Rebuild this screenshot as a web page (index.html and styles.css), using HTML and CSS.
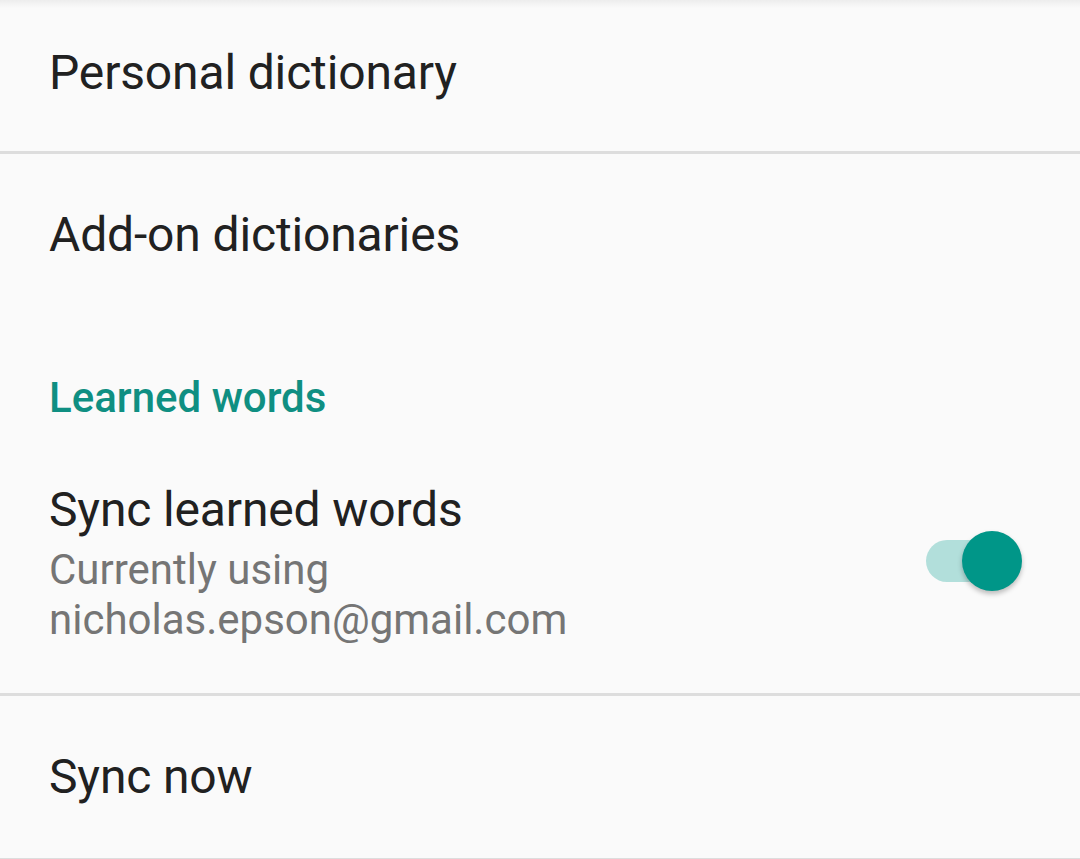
FILE: index.html
```html
<!DOCTYPE html>
<html lang="en">
<head>
  <meta charset="UTF-8">
  <title>Dictionary settings</title>
  <link rel="stylesheet" href="styles.css">
</head>
<body>
  <div class="prefs">
    <div class="pref pref-first">
      <div class="pref-title">Personal dictionary</div>
    </div>
    <div class="divider"></div>
    <div class="pref">
      <div class="pref-title">Add-on dictionaries</div>
    </div>

    <div class="category">Learned words</div>

    <div class="pref pref-switch">
      <div class="pref-text">
        <div class="pref-title">Sync learned words</div>
        <div class="pref-summary">Currently using<br>nicholas.epson@gmail.com</div>
      </div>
      <div class="switch on">
        <div class="switch-track"></div>
        <div class="switch-thumb"></div>
      </div>
    </div>
    <div class="divider"></div>
    <div class="pref">
      <div class="pref-title">Sync now</div>
    </div>
    <div class="divider"></div>
  </div>
</body>
</html>
```

FILE: styles.css
```css
html, body { margin: 0; padding: 0; }
body {
  background: #fafafa;
  font-family: Roboto, 'Noto Sans', sans-serif;
  color: #212121;
  width: 1080px; height: 859px; overflow: hidden;
}
.prefs {
  display: flex; flex-direction: column;
  background: linear-gradient(to bottom, #ededed, #fafafa 8px);
}
.pref {
  display: flex; align-items: center;
  height: 162px; padding: 0 49px; box-sizing: border-box;
}
.pref-first { height: 151px; padding-bottom: 6px; }
.pref-title { font-size: 48px; line-height: 58px; letter-spacing: -0.15px; }
.divider { height: 3px; background: #dddddd; }
.category {
  padding: 57px 49px 0; height: 116px; box-sizing: border-box;
  font-size: 42px; font-weight: 500; color: #0f8f82;
}
.pref-switch { height: 261px; justify-content: space-between; }
.pref-summary { font-size: 42px; line-height: 50px; color: #757575; margin-top: 6px; }
.switch { position: relative; width: 102px; height: 62px; margin: 0 3px 4px 0; }
.switch-track {
  position: absolute; left: 0; top: 10px; width: 84px; height: 42px;
  border-radius: 21px; background: #b2dfdb;
}
.switch-thumb {
  position: absolute; right: 6px; top: 1px; width: 60px; height: 60px;
  border-radius: 50%; background: #009688;
  box-shadow: 0 3px 5px rgba(0,0,0,0.25);
}
```
